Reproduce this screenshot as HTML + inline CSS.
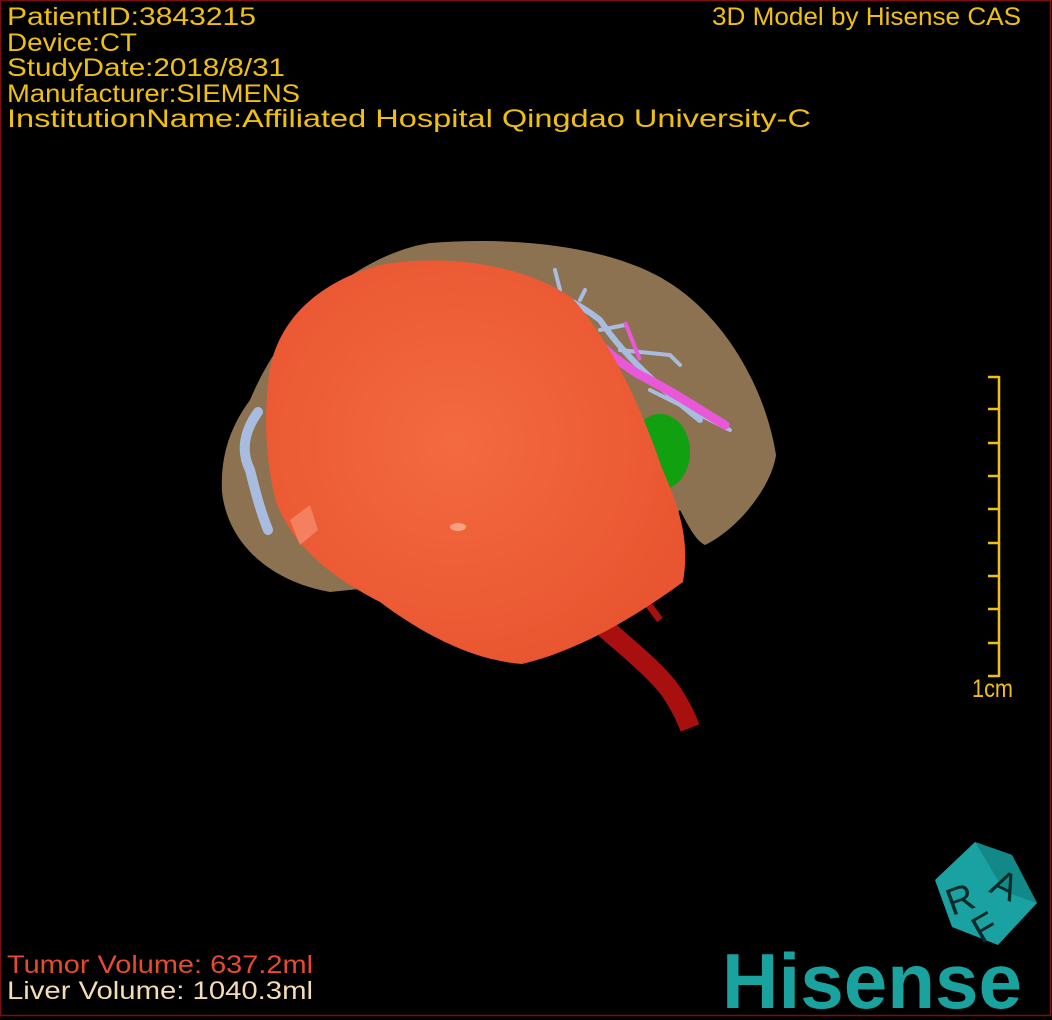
<!DOCTYPE html>
<html><head><meta charset="utf-8"><style>
html,body{margin:0;padding:0;background:#000;}
svg{display:block}
text{font-family:"Liberation Sans Narrow","Liberation Sans",sans-serif;}
</style></head><body>
<svg width="1052" height="1020" viewBox="0 0 1052 1020" xmlns="http://www.w3.org/2000/svg">
<defs>
<radialGradient id="tg" cx="0.45" cy="0.45" r="0.6">
<stop offset="0" stop-color="#f46a40"/><stop offset="1" stop-color="#e85530"/>
</radialGradient>
</defs>
<rect x="0" y="0" width="1052" height="1020" fill="#000"/>
<rect x="0.5" y="0.5" width="1050" height="1015" fill="none" stroke="#7a1010" stroke-width="1.5"/>
<g fill="#f0c010" font-size="25">
<text x="7" y="25" textLength="249" lengthAdjust="spacingAndGlyphs">PatientID:3843215</text>
<text x="7" y="51" textLength="130" lengthAdjust="spacingAndGlyphs">Device:CT</text>
<text x="7" y="76" textLength="278" lengthAdjust="spacingAndGlyphs">StudyDate:2018/8/31</text>
<text x="7" y="102" textLength="293" lengthAdjust="spacingAndGlyphs">Manufacturer:SIEMENS</text>
<text x="7" y="127" textLength="804" lengthAdjust="spacingAndGlyphs">InstitutionName:Affiliated Hospital Qingdao University-C</text>
<text x="712" y="25" textLength="309" lengthAdjust="spacingAndGlyphs">3D Model by Hisense CAS</text>
<text x="972" y="697" textLength="41" lengthAdjust="spacingAndGlyphs">1cm</text>
</g>
<text x="7" y="973" font-size="25" fill="#e84a30" textLength="306" lengthAdjust="spacingAndGlyphs">Tumor Volume:  637.2ml</text>
<text x="7" y="999" font-size="25" fill="#f4dcb4" textLength="306" lengthAdjust="spacingAndGlyphs">Liver Volume: 1040.3ml</text>
<g stroke="#f0c010" stroke-width="2.5">
<line x1="999" y1="376" x2="999" y2="677"/>
<line x1="988" y1="377" x2="999" y2="377"/><line x1="988" y1="409" x2="999" y2="409"/>
<line x1="988" y1="443" x2="999" y2="443"/><line x1="988" y1="476" x2="999" y2="476"/>
<line x1="988" y1="509" x2="999" y2="509"/><line x1="988" y1="543" x2="999" y2="543"/>
<line x1="988" y1="576" x2="999" y2="576"/><line x1="988" y1="609" x2="999" y2="609"/>
<line x1="988" y1="643" x2="999" y2="643"/><line x1="988" y1="676" x2="999" y2="676"/>
</g>
<path d="M250,400 C290,305 370,252 430,243 C520,236 600,248 650,272 C720,305 765,385 776,455 C772,485 740,528 705,545 C695,540 688,525 680,510 L640,560 L330,592 C272,582 228,545 222,492 C220,450 234,422 250,400 Z" fill="#8c7250"/>
<g stroke="#a8bce0" fill="none" stroke-linecap="round">
<path d="M258,412 C245,430 240,450 250,470 C255,490 260,510 268,530" stroke-width="10"/>
<path d="M500,275 C540,285 575,300 600,320 C620,350 650,380 700,420" stroke-width="6"/>
<path d="M560,290 L555,270 M580,300 L585,290 M600,330 L625,325 M620,350 L670,355 L680,365 M650,390 L730,430" stroke-width="4"/>
</g>
<path d="M585,330 C600,345 615,360 640,375 C670,390 700,410 725,425" stroke="#e858d8" stroke-width="9" fill="none" stroke-linecap="round"/>
<path d="M625,322 L640,360" stroke="#e858d8" stroke-width="4"/>
<ellipse cx="660" cy="452" rx="30" ry="38" fill="#10a010"/>
<path d="M605,628 C630,650 655,670 670,690 C680,705 685,715 690,728" stroke="#a81010" stroke-width="20" fill="none"/>
<path d="M645,600 L660,620" stroke="#a81010" stroke-width="7"/>
<path d="M268,385 C272,322 318,282 380,265 C440,254 520,262 572,298 C612,342 642,410 662,468 C680,510 690,540 683,582 C642,612 582,650 522,664 C470,660 420,632 380,602 C322,572 292,542 276,502 C266,462 264,422 268,385 Z" fill="url(#tg)"/>
<path d="M290,520 L310,505 L318,530 L300,545 Z" fill="#f48060"/>
<ellipse cx="458" cy="527" rx="8" ry="4" fill="#f8a080"/>
<polygon points="975,842 1012,855 1037,903 998,945 952,927 935,880" fill="#1aa2a2"/>
<polygon points="975,842 1012,855 1037,903 1005,892" fill="#138888"/>
<g fill="#0a2a2a" font-size="38" font-family="Liberation Sans,sans-serif">
<text x="945" y="912" transform="rotate(-20 960 895)">R</text>
<text x="993" y="897" transform="rotate(25 1003 883)">A</text>
<text x="972" y="940" transform="rotate(-30 985 925)">F</text>
</g>
<text x="722" y="1008" font-size="78" font-weight="bold" fill="#1aa39e" font-family="Liberation Sans,sans-serif" textLength="300" lengthAdjust="spacingAndGlyphs">Hisense</text>
</svg>
</body></html>
